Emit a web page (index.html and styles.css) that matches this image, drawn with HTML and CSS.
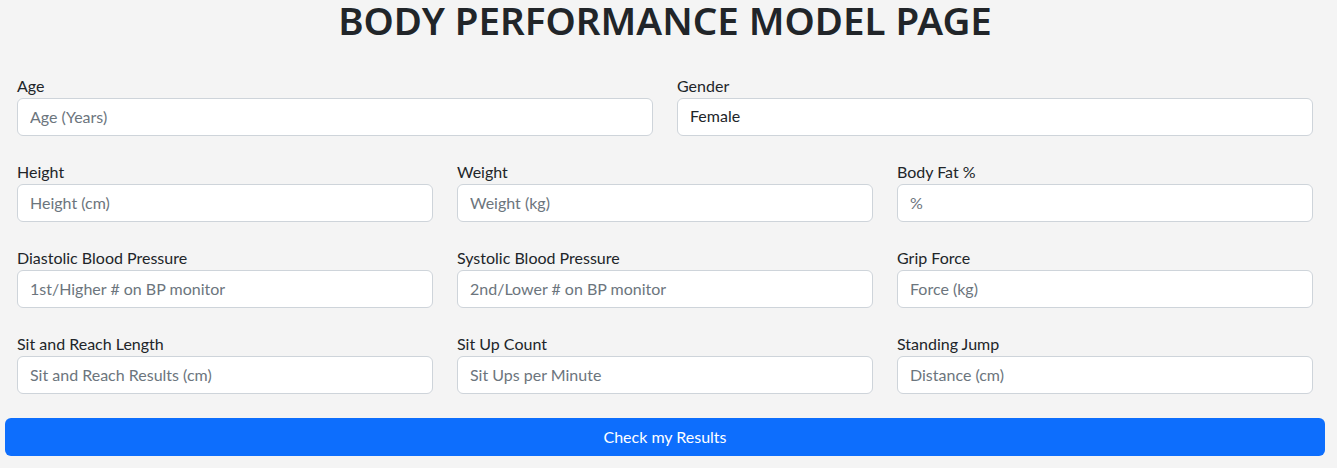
FILE: index.html
```html
<!DOCTYPE html>
<html>
<head>
<meta charset="utf-8">
<link rel="stylesheet" href="styles.css">
</head>
<body>
<div class="page">
  <h1 class="title">BODY PERFORMANCE MODEL PAGE</h1>
  <form class="form">
    <div class="row cols-2">
      <div class="field"><label>Age</label><input class="input" placeholder="Age (Years)"></div>
      <div class="field"><label>Gender</label><div class="input select">Female</div></div>
    </div>
    <div class="row cols-3">
      <div class="field"><label>Height</label><input class="input" placeholder="Height (cm)"></div>
      <div class="field"><label>Weight</label><input class="input" placeholder="Weight (kg)"></div>
      <div class="field"><label>Body Fat %</label><input class="input" placeholder="%"></div>
    </div>
    <div class="row cols-3">
      <div class="field"><label>Diastolic Blood Pressure</label><input class="input" placeholder="1st/Higher # on BP monitor"></div>
      <div class="field"><label>Systolic Blood Pressure</label><input class="input" placeholder="2nd/Lower # on BP monitor"></div>
      <div class="field"><label>Grip Force</label><input class="input" placeholder="Force (kg)"></div>
    </div>
    <div class="row cols-3">
      <div class="field"><label>Sit and Reach Length</label><input class="input" placeholder="Sit and Reach Results (cm)"></div>
      <div class="field"><label>Sit Up Count</label><input class="input" placeholder="Sit Ups per Minute"></div>
      <div class="field"><label>Standing Jump</label><input class="input" placeholder="Distance (cm)"></div>
    </div>
    <button type="button" class="btn">Check my Results</button>
  </form>
</div>
</body>
</html>
```
FILE: styles.css
```css
* { box-sizing: border-box; }
html, body { margin: 0; padding: 0; }
body {
  background: #f4f4f4;
  color: #212529;
  font-family: Lato, "Noto Sans", sans-serif;
  font-size: 16px;
  line-height: 24px;
}
.page {
  width: 1320px;
  margin-left: 5px;
}
.title {
  margin: 0;
  height: 50px;
  text-align: center;
  font-family: "Noto Sans", sans-serif;
  font-size: 38.5px;
  line-height: 41px;
  font-weight: 600;
  color: #212529;
}
.form {
  display: flex;
  flex-direction: column;
  padding-top: 24px;
  gap: 24px;
}
.row {
  display: grid;
}
.cols-2 { grid-template-columns: 1fr 1fr; }
.cols-3 { grid-template-columns: 1fr 1fr 1fr; }
.field {
  display: flex;
  flex-direction: column;
  padding: 0 12px;
}
label {
  display: block;
  height: 24px;
  line-height: 24px;
}
.input {
  display: block;
  width: 100%;
  height: 38px;
  padding: 5px 12px 7px;
  font: inherit;
  color: #212529;
  background: #fff;
  border: 1px solid #ced4da;
  border-radius: 6px;
  outline: none;
}
.input::placeholder { color: #6c757d; opacity: 1; }
.select { line-height: 24px; padding: 5px 12px 7px; }
.btn {
  display: block;
  width: 100%;
  height: 38px;
  border: 0;
  border-radius: 6px;
  background: #0d6efd;
  color: #fff;
  font: inherit;
  cursor: pointer;
  padding: 0 0 1px;
}
```
